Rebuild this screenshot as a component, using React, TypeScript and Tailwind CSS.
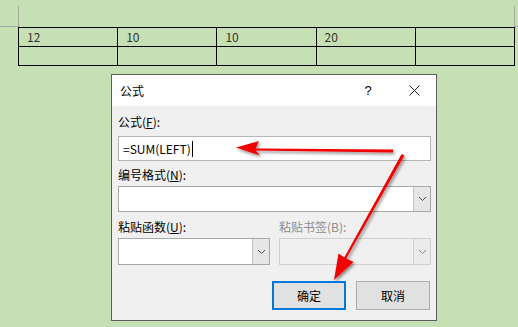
import { ReactNode } from 'react';

const FONT = { fontFamily: '"Noto Sans CJK SC", "Microsoft YaHei", sans-serif' };

const cells = [
  ['12', '10', '10', '20', ''],
  ['', '', '', '', ''],
];

function Chevron({ muted }: { muted?: boolean }) {
  return (
    <svg width="9" height="6" viewBox="0 0 9 6" className="block">
      <path d="M1 1 L4.5 4.5 L8 1" fill="none" stroke={muted ? '#8a8a8a' : '#505050'} strokeWidth="1" />
    </svg>
  );
}

function Select({ className, disabled }: { className?: string; disabled?: boolean }) {
  return (
    <div
      className={`flex border ${disabled ? 'border-[#cfcfcf] bg-[#f0f0f0]' : 'border-[#a8a8a8] bg-white'} ${className ?? ''}`}
    >
      <div className="flex-1" />
      <div
        className={`w-[17px] flex items-center justify-center border-l ${
          disabled ? 'border-[#cfcfcf] bg-[#ebebeb]' : 'border-[#c4c4c4] bg-[#e6e6e6]'
        }`}
      >
        <Chevron muted={disabled} />
      </div>
    </div>
  );
}

function Label({ children, muted }: { children: ReactNode; muted?: boolean }) {
  return (
    <div className={`text-[12px] leading-[16px] h-[16px] ${muted ? 'text-[#8d8d8d]' : 'text-black'}`}>
      {children}
    </div>
  );
}

function Arrows() {
  return (
    <svg width="518" height="327" viewBox="0 0 518 327" className="absolute left-0 top-0 pointer-events-none">
      <defs>
        <filter id="sh" x="-20%" y="-20%" width="140%" height="140%">
          <feDropShadow dx="1.5" dy="2" stdDeviation="1.6" floodColor="#000" floodOpacity="0.45" />
        </filter>
      </defs>
      <g filter="url(#sh)" fill="#f40000">
        {/* arrow pointing at the formula */}
        <polygon points="236,147.5 259,141 255.5,148.6 393,149.6 393,152.6 255.5,150.6 260,155.5" />
        {/* arrow pointing at the OK button */}
        <polygon points="334,280 338.5,253.5 344.3,257.6 401.6,154 404.4,155.6 346.2,258.6 353.5,262" />
      </g>
    </svg>
  );
}

export default function App() {
  return (
    <div className="relative w-[518px] h-[327px] overflow-hidden bg-[#c6e0b4]" style={FONT}>
      {/* page corner marks */}
      <div className="absolute left-[18px] top-[6px] w-px h-[21px] bg-[#a6a6a6]" />
      <div className="absolute left-0 top-[26px] w-[18px] h-px bg-[#a6a6a6]" />
      <div className="absolute left-[514px] top-[6px] w-px h-[21px] bg-[#a6a6a6]" />
      <div className="absolute left-[515px] top-[26px] w-[3px] h-px bg-[#a6a6a6]" />

      {/* table */}
      <div className="pt-[27px] pl-[18px]">
        <div className="w-[497px] border-t border-l border-black">
          {cells.map((row, r) => (
            <div key={r} className="grid grid-cols-5 h-[19px]">
              {row.map((c, i) => (
                <div
                  key={i}
                  className="border-r border-b border-black pl-[8px] text-[12px] leading-[18px] text-[#333]"
                >
                  {c}
                </div>
              ))}
            </div>
          ))}
        </div>
      </div>

      {/* dialog */}
      <div className="absolute left-[111px] top-[74px] w-[326px] h-[247px] border border-[#5f5f5f] bg-[#f0f0f0] flex flex-col">
        <div className="h-[31px] bg-white flex items-center pl-[8px] pr-[16px] text-[12px] text-black">
          <span className="flex-1">公式</span>
          <span className="w-[10px] text-center mr-[36px] text-[13px]" style={{ fontFamily: '"Liberation Sans", sans-serif' }}>?</span>
          <svg width="11" height="11" viewBox="0 0 11 11">
            <path d="M0.5 0.5 L10.5 10.5 M10.5 0.5 L0.5 10.5" stroke="#222" strokeWidth="1" />
          </svg>
        </div>

        <div className="flex flex-col pl-[6px] pr-[5px]">
          <div className="mt-[8px]">
            <Label>
              公式(<span className="underline">F</span>):
            </Label>
          </div>
          <div className="mt-[6px] h-[25px] bg-white border border-[#b4b4b4] flex items-center pl-[4px] text-[12px] text-black">
            =SUM(LEFT)
            <span className="ml-[1px] w-px h-[16px] bg-black" />
          </div>

          <div className="mt-[6px]">
            <Label>
              编号格式(<span className="underline">N</span>):
            </Label>
          </div>
          <Select className="mt-[3px] h-[26px]" />

          <div className="mt-[7px] flex gap-[9px]">
            <div className="w-[152px]">
              <Label>
                粘贴函数(<span className="underline">U</span>):
              </Label>
            </div>
            <div className="w-[152px]">
              <Label muted>粘贴书签(B):</Label>
            </div>
          </div>
          <div className="mt-[3px] flex gap-[9px]">
            <Select className="w-[152px] h-[27px]" />
            <Select className="w-[152px] h-[27px]" disabled />
          </div>

          <div className="mt-[16px] flex justify-end gap-[10px] pr-[1px]">
            <button className="w-[74px] h-[29px] border-2 border-[#0078d7] bg-[#e1e1e1] text-[12px] text-black">
              确定
            </button>
            <button className="w-[74px] h-[29px] border border-[#adadad] bg-[#e1e1e1] text-[12px] text-black">
              取消
            </button>
          </div>
        </div>
      </div>

      <Arrows />
    </div>
  );
}
